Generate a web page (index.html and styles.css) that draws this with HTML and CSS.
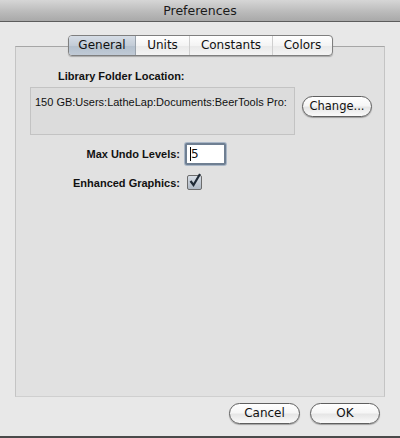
FILE: index.html
```html
<!DOCTYPE html>
<html>
<head>
<meta charset="utf-8">
<link rel="stylesheet" href="styles.css">
</head>
<body>
<div class="window">
  <div class="titlebar">Preferences</div>
  <div class="content">
    <div class="tabs">
      <div class="tab selected t-general">General</div>
      <div class="tab t-units">Units</div>
      <div class="tab t-constants">Constants</div>
      <div class="tab last t-colors">Colors</div>
    </div>
    <div class="panel">
      <div class="section-label">Library Folder Location:</div>
      <div class="path-row">
        <div class="path-box">150 GB:Users:LatheLap:Documents:BeerTools Pro:</div>
        <div class="button change">Change...</div>
      </div>
      <div class="form">
        <div class="form-label">Max Undo Levels:</div>
        <div class="field"><span class="caret"></span>5</div>
        <div class="form-label">Enhanced Graphics:</div>
        <div class="checkbox">
          <svg width="16" height="17" viewBox="0 0 16 17">
            <path d="M3.5 9 L6.5 13 L13 2" fill="none" stroke="#1f2a36" stroke-width="2.2" stroke-linejoin="miter"/>
          </svg>
        </div>
      </div>
    </div>
    <div class="footer">
      <div class="button cancel">Cancel</div>
      <div class="button ok">OK</div>
    </div>
  </div>
</div>
</body>
</html>
```
FILE: styles.css
```css
html, body {
  margin: 0;
  padding: 0;
}
body {
  width: 400px;
  height: 438px;
  overflow: hidden;
  background: #e8e8e8;
  font-family: "DejaVu Sans", "Liberation Sans", sans-serif;
  font-size: 11px;
  color: #111;
}
.window {
  width: 400px;
  height: 438px;
  display: flex;
  flex-direction: column;
  box-sizing: border-box;
  border-bottom: 2px solid #4a4a4a;
}
.titlebar {
  height: 21px;
  border-bottom: 1px solid #5c5c5c;
  background: linear-gradient(#d6d6d6, #b9b9b9 60%, #a9a9a9);
  text-align: center;
  line-height: 21px;
  font-size: 12.5px;
  color: #1a1a1a;
  flex: none;
}
.content {
  flex: 1;
  display: flex;
  flex-direction: column;
  padding: 13px 15px 0 15px;
}
.tabs {
  align-self: center;
  display: flex;
  height: 19px;
  border: 1px solid #7f7f7f;
  border-radius: 4px;
  background: linear-gradient(#ffffff, #f4f4f4 50%, #e9e9e9 51%, #f4f4f4);
  box-shadow: 0 1px 1px rgba(0,0,0,0.25);
  position: relative;
  z-index: 1;
  margin-left: 1px;
  overflow: hidden;
}
.tab {
  box-sizing: border-box;
  text-align: center;
  line-height: 19px;
  font-size: 12px;
  border-right: 1px solid #cfcfcf;
  color: #111;
}
.t-general { width: 67px; }
.t-units { width: 54px; }
.t-constants { width: 83px; }
.t-colors { width: 59px; }
.tab.last {
  border-right: none;
}
.tab.selected {
  background: linear-gradient(#d6dde6, #c3ccd7 50%, #b3bfcc 51%, #c0cad6);
  border-right: 1px solid #9aa3ad;
}
.panel {
  margin-top: -10px;
  height: 351px;
  box-sizing: border-box;
  border: 1px solid #c4c4c4;
  border-top-color: #a6a6a6;
  border-bottom-color: #cfcfcf;
  background: #e1e1e1;
  padding-top: 23px;
  display: flex;
  flex-direction: column;
}
.section-label {
  font-family: "Liberation Sans", sans-serif;
  font-weight: bold;
  margin-left: 42px;
  height: 13px;
  line-height: 13px;
}
.path-row {
  display: flex;
  margin-top: 4px;
  align-items: flex-start;
}
.path-box {
  margin-left: 14px;
  width: 265px;
  height: 48px;
  box-sizing: border-box;
  border: 1px solid #c3c3c3;
  background: #dcdcdc;
  padding: 8px 0 0 4px;
  font-family: "Liberation Sans", sans-serif;
  font-size: 11px;
  white-space: nowrap;
}
.button {
  height: 21px;
  box-sizing: border-box;
  border: 1px solid #5f5f5f;
  border-radius: 11px;
  background: linear-gradient(#ffffff, #f6f6f6 45%, #e6e6e6 55%, #fafafa);
  box-shadow: 0 1px 1px rgba(0,0,0,0.3);
  text-align: center;
  line-height: 19px;
  font-size: 12px;
  color: #111;
}
.change {
  width: 70px;
  margin-left: 7px;
  margin-top: 9px;
  font-size: 11.5px;
}
.form {
  display: grid;
  grid-template-columns: 164px auto;
  column-gap: 5px;
  row-gap: 10px;
  margin-top: 8px;
  align-items: center;
}
.form-label {
  text-align: right;
  font-family: "Liberation Sans", sans-serif;
  font-weight: bold;
}
.field {
  width: 41px;
  height: 22px;
  box-sizing: border-box;
  border: 2px solid #6f7f92;
  border-radius: 2px;
  box-shadow: 0 0 0 1px #a9b6c6;
  background: #fff;
  padding-left: 3px;
  line-height: 18px;
  font-size: 12px;
  display: flex;
  align-items: center;
}
.caret {
  display: inline-block;
  width: 1px;
  height: 14px;
  background: #000;
}
.checkbox {
  width: 15px;
  height: 15px;
  margin-left: 2px;
  box-sizing: border-box;
  border: 1px solid #6c6c6c;
  border-radius: 2px;
  background: linear-gradient(#d8dee6, #aeb8c4);
  position: relative;
}
.checkbox svg {
  position: absolute;
  left: -1px;
  top: -4px;
}
.footer {
  display: flex;
  justify-content: flex-end;
  gap: 10px;
  margin-top: 6px;
  padding-right: 5px;
}
.cancel {
  width: 71px;
}
.ok {
  width: 70px;
}
```
